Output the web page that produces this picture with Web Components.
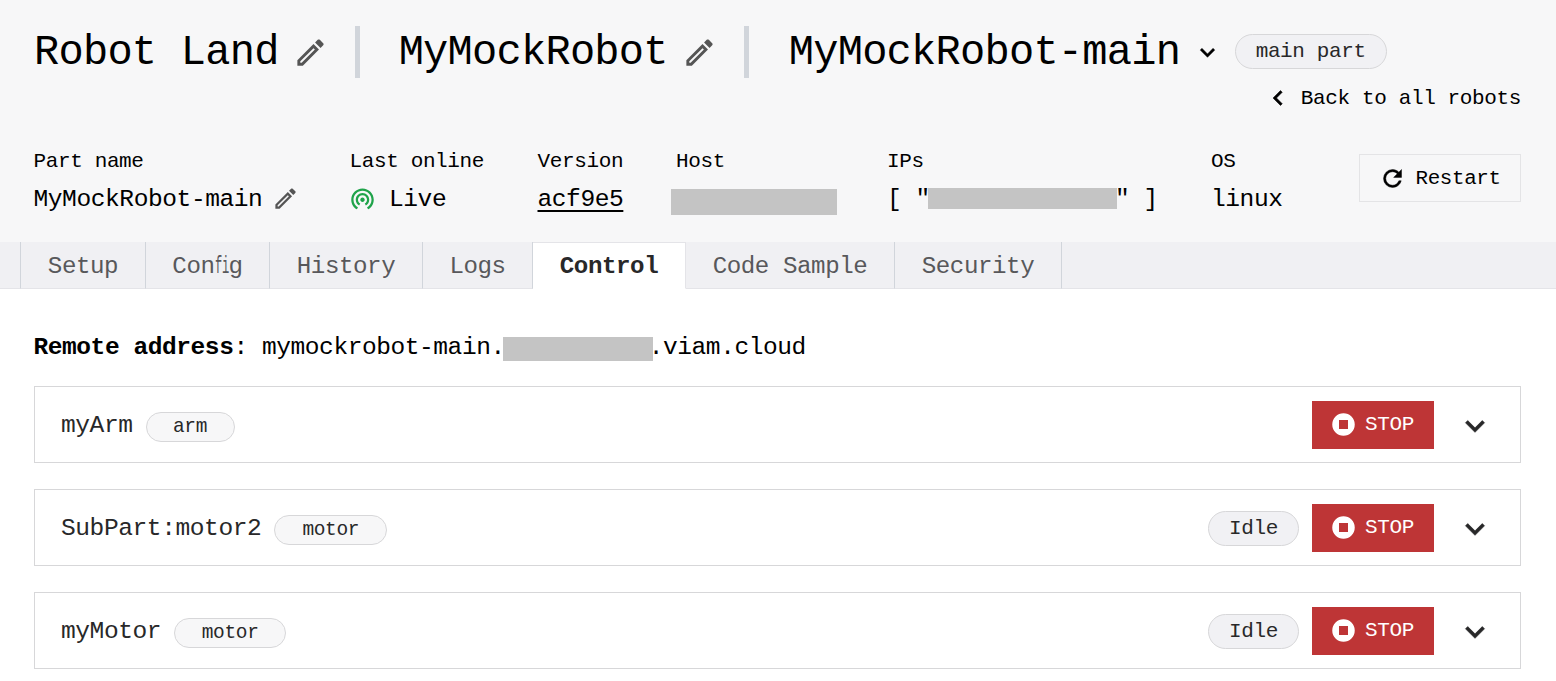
<!DOCTYPE html>
<html lang="en">
<head>
<meta charset="utf-8">
<title>MyMockRobot-main</title>
<style>
body { margin: 0; background: #fff; font-family: "Liberation Mono", "DejaVu Sans Mono", monospace; color: #000; }
</style>
</head>
<body>
<robot-page></robot-page>
<script>
const ICONS = {
  pencil: 'M14.06,9L15,9.94L5.92,19H5V18.08L14.06,9M17.66,3C17.41,3 17.15,3.1 16.96,3.29L15.13,5.12L18.88,8.87L20.71,7.04C21.1,6.65 21.1,6 20.71,5.63L18.37,3.29C18.17,3.09 17.92,3 17.66,3M14.06,6.19L3,17.25V21H6.75L17.81,9.94L14.06,6.19Z',
  down: 'M7.41,8.58L12,13.17L16.59,8.58L18,10L12,16L6,10L7.41,8.58Z',
  left: 'M15.41,16.58L10.83,12L15.41,7.41L14,6L8,12L14,18L15.41,16.58Z',
  refresh: 'M17.65,6.35C16.2,4.9 14.21,4 12,4A8,8 0 0,0 4,12A8,8 0 0,0 12,20C15.73,20 18.84,17.45 19.73,14H17.65C16.83,16.33 14.61,18 12,18A6,6 0 0,1 6,12A6,6 0 0,1 12,6C13.66,6 15.14,6.69 16.22,7.78L13,11H20V4L17.65,6.35Z',
  live: 'M12 11c-1.1 0-2 .9-2 2s.9 2 2 2 2-.9 2-2-.9-2-2-2zm6 2c0-3.31-2.69-6-6-6s-6 2.69-6 6c0 2.22 1.21 4.15 3 5.19l1-1.74c-1.19-.7-2-1.97-2-3.45 0-2.21 1.79-4 4-4s4 1.79 4 4c0 1.48-.81 2.75-2 3.45l1 1.74c1.79-1.04 3-2.97 3-5.19zM12 3C6.48 3 2 7.48 2 13c0 3.7 2.01 6.92 4.99 8.65l1-1.73C5.61 18.53 4 15.96 4 13c0-4.42 3.58-8 8-8s8 3.58 8 8c0 2.96-1.61 5.53-4 6.92l1 1.73c2.99-1.73 5-4.95 5-8.65 0-5.52-4.48-10-10-10z',
  stop: 'M12,2A10,10 0 0,0 2,12A10,10 0 0,0 12,22A10,10 0 0,0 22,12A10,10 0 0,0 12,2M8,8H16V16H8V8'
};

const define = (name, html) => customElements.define(name, class extends HTMLElement {
  constructor() {
    super();
    this.attachShadow({ mode: 'open' }).innerHTML = typeof html === 'function' ? html(this) : html;
  }
});

/* Monospaced label; "size" sets both the glyph size and the cell pitch. */
define('v-text', el => {
  const s = +el.getAttribute('size') || 20;
  return `<style>
    :host { display: block; white-space: pre; line-height: 1.4; font-size: ${(s * 1.05).toFixed(2)}px; letter-spacing: ${(s * -0.0185).toFixed(3)}px; }
  </style><slot></slot>`;
});

define('v-icon', el => {
  const s = el.getAttribute('size');
  const name = el.getAttribute('name');
  const bold = name === 'down' || name === 'left' || name === 'refresh';
  return `<style>:host { display: block; flex: none; width: ${s}px; height: ${s}px; } svg { display: block; }</style>
  <svg width="${s}" height="${s}" viewBox="0 0 24 24" fill="currentColor" stroke="currentColor" stroke-width="${bold ? .4 : 0}" fill-rule="${name === 'stop' ? 'evenodd' : 'nonzero'}"><path d="${ICONS[name]}"/></svg>`;
});

define('v-pill', el => `<style>
  :host { display: flex; box-sizing: border-box; align-items: center; justify-content: center; flex: none; height: 35px; padding-top: 1px; border: 1px solid #d7d7d9; border-radius: 18px; background: #f1f1f4; color: #282829; }
  :host([small]) { height: 30px; padding-top: 2px; background: #f7f7f8; }
</style><v-text size="${el.hasAttribute('small') ? 18.6 : 20}"><slot></slot></v-text>`);

define('v-redacted', el => `<style>:host { display: block; flex: none; background: #c4c4c4; width: ${el.getAttribute('w')}px; height: ${el.getAttribute('h')}px; }</style>`);

define('v-divider', `<style>:host { display: block; flex: none; width: 4.5px; height: 52px; background: #d1d5db; }</style>`);

define('title-row', `<style>
  :host { display: flex; align-items: center; height: 52px; padding-left: 34px; }
  .pen { color: #555; }
  v-text { padding-top: 2px; }
  v-pill { margin-bottom: 1px; }
</style>
<v-text size="40">Robot Land</v-text><v-icon class="pen" name="pencil" size="35" style="margin-left:14.5px"></v-icon>
<v-divider style="margin-left:27px"></v-divider>
<v-text size="40" style="margin-left:39px">MyMockRobot</v-text><v-icon class="pen" name="pencil" size="35" style="margin-left:14.5px"></v-icon>
<v-divider style="margin-left:27px"></v-divider>
<v-text size="40" style="margin-left:40px">MyMockRobot-main</v-text>
<v-icon name="down" size="29" style="margin-left:12.5px"></v-icon>
<v-pill style="width:152px;margin-left:13px">main part</v-pill>`);

define('info-field', el => `<style>
  :host { display: block; flex: none; width: ${el.getAttribute('w')}px; }
  .value { display: flex; align-items: center; height: 34px; margin-top: 7px; }
</style><v-text size="20">${el.getAttribute('label')}</v-text><div class="value"><slot></slot></div>`);

define('outline-button', `<style>
  :host { display: flex; box-sizing: border-box; align-items: center; width: 162px; height: 48px; border: 1px solid #e4e4e6; padding-left: 19px; gap: 10px; }
  v-text { padding-top: 2px; }
</style><v-icon name="refresh" size="27"></v-icon><v-text size="19.9"><slot></slot></v-text>`);

define('page-header', `<style>
  :host { display: block; box-sizing: border-box; height: 242px; padding-top: 26px; background: #f7f7f8; }
  .back { display: flex; justify-content: flex-end; align-items: center; height: 30px; margin-top: 6px; padding-right: 35px; gap: 8px; }
  .back v-icon { margin-bottom: 2px; }
  .info { display: flex; padding-left: 33.5px; margin-top: 33px; }
  .restart { margin-top: 7px; }
  .link { text-decoration: underline; text-decoration-thickness: 2px; text-underline-offset: 4px; }
</style>
<title-row></title-row>
<div class="back"><v-icon name="left" size="30"></v-icon><v-text size="20">Back to all robots</v-text></div>
<div class="info">
  <info-field label="Part name" w="316"><v-text size="23.4">MyMockRobot-main</v-text><v-icon name="pencil" size="27" style="color:#555;margin-left:9.5px;margin-bottom:4px"></v-icon></info-field>
  <info-field label="Last online" w="188"><v-icon name="live" size="27" style="color:#1fa34a;margin:0 0 4px -.5px"></v-icon><v-text size="23.4" style="margin-left:13px">Live</v-text></info-field>
  <info-field label="Version" w="138.5"><v-text class="link" size="23.4">acf9e5</v-text></info-field>
  <info-field label="Host" w="211"><v-redacted w="166" h="26" style="margin:4px 0 0 -5px"></v-redacted></info-field>
  <info-field label="IPs" w="324"><v-text size="23.4">[ "</v-text><v-redacted w="189" h="21" style="margin:0 0 3px -2px"></v-redacted><v-text size="23.4" style="margin-left:-2px">" ]</v-text></info-field>
  <info-field label="OS" w="147.5"><v-text size="23.4">linux</v-text></info-field>
  <outline-button class="restart">Restart</outline-button>
</div>`);

define('nav-tab', el => `<style>
  :host { display: flex; box-sizing: border-box; flex: none; align-items: center; justify-content: center; width: ${el.getAttribute('w')}px; height: 47px; border-right: 1px solid #d1d5db; border-bottom: 1px solid #e4e4e8; color: #58585b; padding-top: 4px; }
  :host([selected]) { background: #fff; color: #282829; font-weight: 700; border-top: 1px solid #e4e4e8; border-right-color: #e4e4e8; border-bottom-color: #fff; padding-top: 3px; }
</style><v-text size="23"><slot></slot></v-text>`);

define('nav-tabs', `<style>
  :host { display: flex; height: 47px; background: #f0f0f3; }
  .edge { box-sizing: border-box; width: 21px; border-right: 1px solid #d1d5db; border-bottom: 1px solid #e4e4e8; }
  .rest { flex: 1; border-bottom: 1px solid #e4e4e8; }
  /* "fi" shares a single character cell */
  .fi { display: inline-block; transform: scaleX(.5); transform-origin: left; margin-right: -14.07px; }
</style>
<div class="edge"></div>
<nav-tab w="125">Setup</nav-tab>
<nav-tab w="124">Con<span class="fi">fi</span>g</nav-tab>
<nav-tab w="153">History</nav-tab>
<nav-tab w="110">Logs</nav-tab>
<nav-tab w="153" selected>Control</nav-tab>
<nav-tab w="209">Code Sample</nav-tab>
<nav-tab w="167">Security</nav-tab>
<div class="rest"></div>`);

define('remote-address', `<style>
  :host { display: flex; align-items: center; height: 34px; padding-left: 33.5px; }
  b { font-weight: 700; }
  v-text { padding-top: 2px; }
</style><v-text size="23.35"><b>Remote address</b>: mymockrobot-main.</v-text><v-redacted w="150" h="24" style="margin:3px 0 0 -2px"></v-redacted><v-text size="23.35" style="margin-left:-4px">.viam.cloud</v-text>`);

define('stop-button', `<style>
  :host { display: flex; box-sizing: border-box; align-items: center; width: 122px; height: 48px; padding-left: 18px; gap: 8px; background: #be3536; color: #fff; }
  v-text { padding-top: 1px; }
</style><v-icon name="stop" size="27"></v-icon><v-text size="20">STOP</v-text>`);

define('component-card', el => `<style>
  :host { display: flex; box-sizing: border-box; align-items: center; height: 77px; border: 1px solid #d7d7d9; padding: 0 26px 0 26px; background: #fff; color: #282829; }
  .name { padding-top: 3px; }
  .grow { flex: 1; }
  .kind { margin: 4px 0 0 13px; width: ${el.getAttribute('kw')}px; }
  .state { width: 91px; margin: 2px 13px 0 0; }
</style>
<v-text class="name" size="23.4"><slot></slot></v-text><v-pill small class="kind">${el.getAttribute('kind')}</v-pill>
<div class="grow"></div>
${el.hasAttribute('state') ? `<v-pill class="state">${el.getAttribute('state')}</v-pill>` : ''}
<stop-button></stop-button><v-icon name="down" size="38" style="margin:2px .5px 0 21.5px"></v-icon>`);

define('robot-page', `<style>
  :host { display: block; }
  main { padding: 41px 35px 0 0; }
  .cards { display: flex; flex-direction: column; gap: 26px; margin: 22px 0 0 34px; }
</style>
<page-header></page-header>
<nav-tabs></nav-tabs>
<main>
  <remote-address></remote-address>
  <div class="cards">
    <component-card kind="arm" kw="89">myArm</component-card>
    <component-card kind="motor" kw="113" state="Idle">SubPart:motor2</component-card>
    <component-card kind="motor" kw="112" state="Idle">myMotor</component-card>
  </div>
</main>`);
</script>
</body>
</html>
